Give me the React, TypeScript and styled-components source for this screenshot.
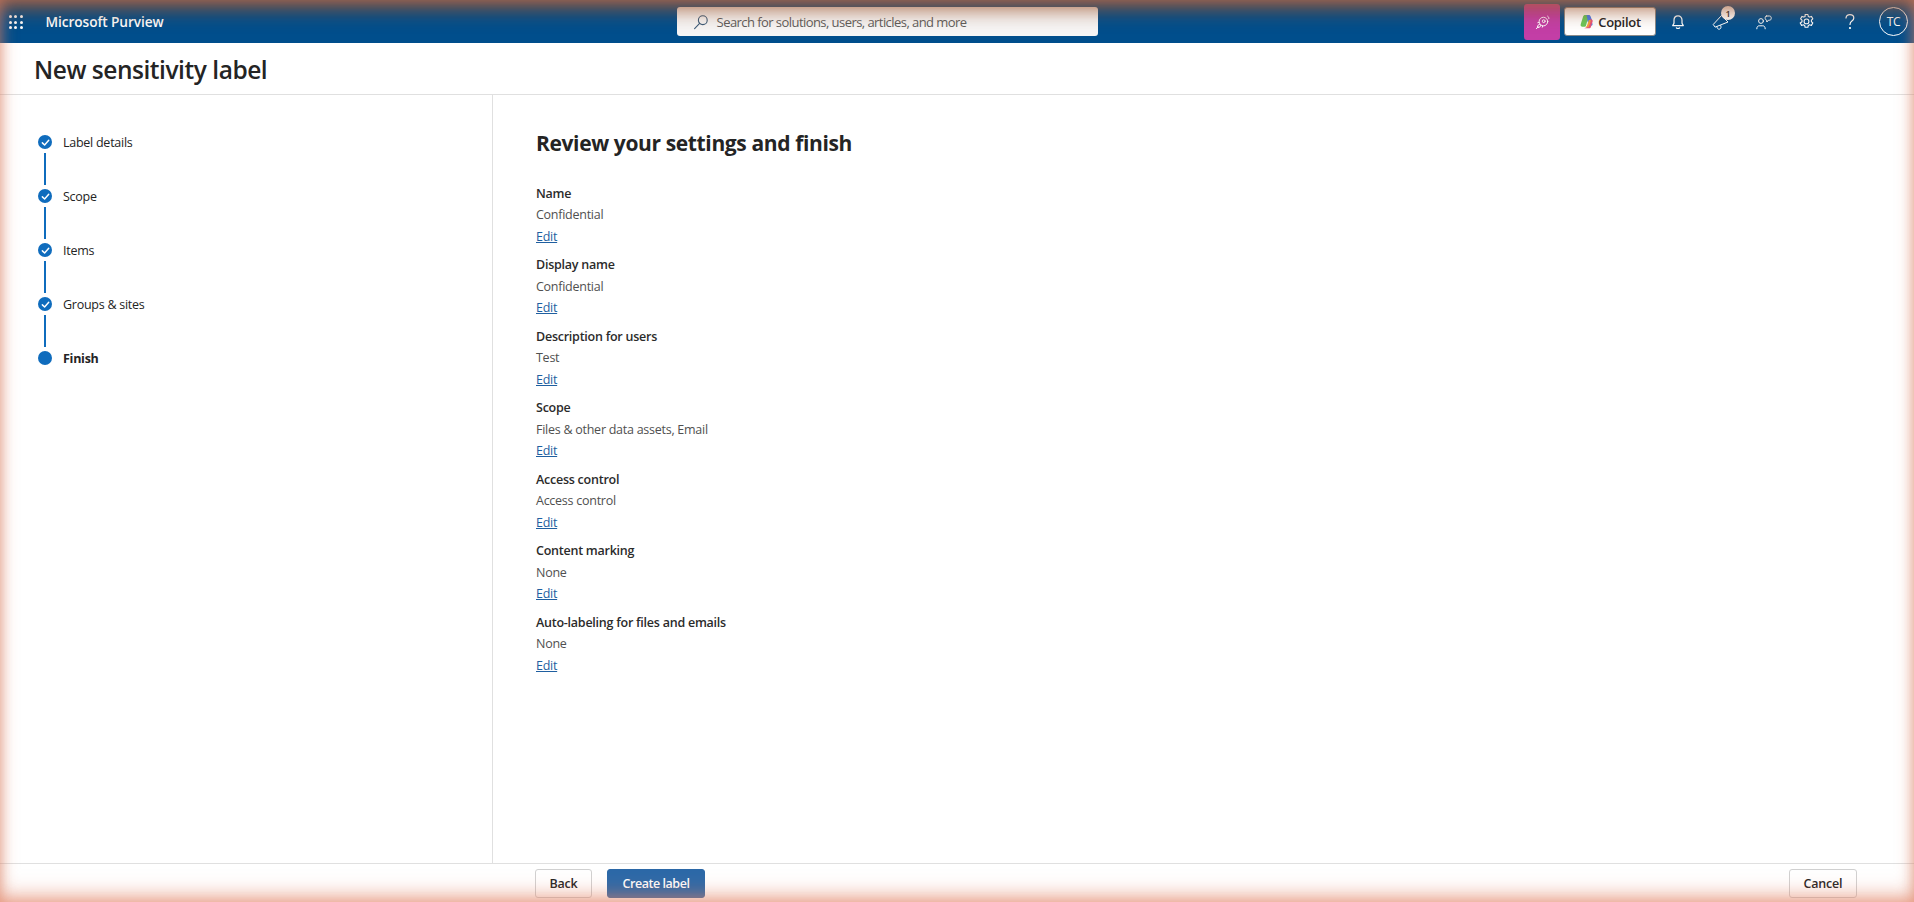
import React from "react";
import styled, { createGlobalStyle } from "styled-components";

const Global = createGlobalStyle`
  html, body { margin: 0; padding: 0; height: 100%; background: #fff; }
  #root { height: 100%; }
  * { box-sizing: border-box; }
  body { font-family: "Open Sans", "Noto Sans", "Liberation Sans", sans-serif; color: #242424; overflow: hidden; }
`;

const Page = styled.div`
  position: relative;
  width: 1914px;
  height: 902px;
  display: grid;
  grid-template-rows: 43px 52px 1fr 39px;
  background: #fff;
`;

const Vignette = styled.div`
  position: absolute;
  inset: 0;
  pointer-events: none;
  z-index: 5;
  box-shadow:
    inset 0 0 15px 0 rgba(226, 130, 100, 0.6),
    inset 0 -12px 22px -6px rgba(226, 130, 100, 0.55),
    inset 0 22px 20px -12px rgba(150, 80, 40, 0.75);
`;

const TopBar = styled.header`
  display: flex;
  align-items: center;
  background: #004e8c;
  color: #fff;
  position: relative;
`;

const Waffle = styled.div`
  display: grid;
  grid-template-columns: repeat(3, 3px);
  gap: 2.3px;
  margin-left: 9px;
  margin-top: 1px;
  i { width: 3px; height: 3px; background: #fff; border-radius: 50%; display: block; }
`;

const Brand = styled.div`
  margin-left: 23px;
  font-size: 13.7px;
  font-weight: 600;
  letter-spacing: -0.1px;
  width: 631px;
  white-space: nowrap;
`;

const Search = styled.div`
  width: 421px;
  height: 29px;
  background: #f6f5f5;
  border-radius: 3px;
  display: flex;
  align-items: center;
  padding-left: 16px;
  gap: 8px;
  color: #5c5c5c;
  font-size: 13px;
  letter-spacing: -0.56px;
  svg { flex: none; }
`;

const Actions = styled.div`
  margin-left: auto;
  display: flex;
  align-items: center;
  height: 100%;
`;

const PinkTile = styled.div`
  width: 36px;
  height: 36px;
  border-radius: 3px;
  background: #c33ea6;
  display: flex;
  align-items: center;
  justify-content: center;
  margin-right: 4px;
  margin-top: 1px;
`;

const CopilotBtn = styled.div`
  width: 92px;
  height: 29px;
  background: #fff;
  border: 1px solid #8a8a8a;
  border-radius: 3px;
  color: #242424;
  font-size: 13px;
  font-weight: 600;
  letter-spacing: -0.3px;
  display: flex;
  align-items: center;
  justify-content: center;
  gap: 4px;
`;

const IconSlot = styled.div`
  position: relative;
  width: 43px;
  height: 100%;
  display: flex;
  align-items: center;
  justify-content: center;
`;

const Badge = styled.span`
  position: absolute;
  top: 6px;
  left: 22px;
  width: 14px;
  height: 14px;
  border-radius: 50%;
  background: #fff;
  color: #242424;
  font-size: 9px;
  font-weight: 600;
  display: flex;
  align-items: center;
  justify-content: center;
`;

const Avatar = styled.div`
  width: 29px;
  height: 29px;
  border: 1px solid #fff;
  border-radius: 50%;
  display: flex;
  align-items: center;
  justify-content: center;
  font-size: 12px;
  letter-spacing: -0.3px;
  margin: 0 6px 0 8px;
`;

const TitleBand = styled.div`
  border-bottom: 1px solid #e0e0e0;
  padding-left: 34px;
  display: flex;
  align-items: center;
`;

const PageTitle = styled.h1`
  margin: 0;
  font-size: 24.5px;
  font-weight: 600;
  letter-spacing: -0.46px;
  color: #242424;
  padding-top: 2px;
`;

const Body = styled.div`
  display: grid;
  grid-template-columns: 493px 1fr;
  min-height: 0;
`;

const StepRail = styled.nav`
  border-right: 1px solid #e0e0e0;
  padding: 40px 0 0 38px;
`;

const Step = styled.div`
  display: flex;
  align-items: flex-start;
  gap: 11px;
  height: 54px;
`;

const StepMark = styled.div`
  width: 14px;
  display: flex;
  flex-direction: column;
  align-items: center;
`;

const Dot = styled.div`
  width: 14px;
  height: 14px;
  border-radius: 50%;
  background: #0f6cbd;
  display: flex;
  align-items: center;
  justify-content: center;
`;

const Connector = styled.div`
  width: 2px;
  height: 32px;
  margin-top: 4px;
  background: #0f6cbd;
`;

const StepLabel = styled.div<{ $current?: boolean }>`
  font-size: 12.5px;
  line-height: 14px;
  letter-spacing: -0.26px;
  padding-top: 1px;
  font-weight: ${(p) => (p.$current ? 700 : 400)};
  color: #242424;
`;

const Main = styled.main`
  padding: 34px 0 0 43px;
`;

const Heading = styled.h2`
  margin: 0 0 25.5px;
  font-size: 21px;
  line-height: 28px;
  font-weight: 700;
  letter-spacing: -0.37px;
  color: #242424;
`;

const Group = styled.section`
  height: 71.5px;
  font-size: 12.5px;
  line-height: 21.5px;
  letter-spacing: -0.26px;
`;

const FieldLabel = styled.div`
  font-weight: 600;
  letter-spacing: -0.24px;
  color: #2b2b2b;
`;

const FieldValue = styled.div`
  color: #505050;
`;

const EditLink = styled.a`
  color: #1f5fa0;
  text-decoration: underline;
  display: block;
  width: max-content;
`;

const Footer = styled.footer`
  border-top: 1px solid #e0e0e0;
  display: flex;
  align-items: center;
  padding: 0 57px 0 535px;
  gap: 15px;
`;

const Button = styled.button<{ $primary?: boolean; $w: number }>`
  width: ${(p) => p.$w}px;
  height: 29px;
  border-radius: 3px;
  border: 1px solid ${(p) => (p.$primary ? "#2c69a8" : "#d1d1d1")};
  background: ${(p) => (p.$primary ? "#2c69a8" : "#fff")};
  color: ${(p) => (p.$primary ? "#fff" : "#242424")};
  font-family: inherit;
  font-size: 12.5px;
  font-weight: 600;
  letter-spacing: ${(p) => (p.$primary ? "-0.45px" : "-0.2px")};
  padding: 0;
`;

const Spacer = styled.div`
  flex: 1;
`;

const Check = () => (
  <svg width="9" height="9" viewBox="0 0 10 10" fill="none">
    <path d="M1.5 5.4 4 7.8 8.6 2.6" stroke="#fff" strokeWidth="1.6" strokeLinecap="round" strokeLinejoin="round" />
  </svg>
);

const SearchIcon = () => (
  <svg width="16" height="16" viewBox="0 0 16 16" fill="none" stroke="#3a5a78" strokeWidth="1.1" strokeLinecap="round">
    <circle cx="9.8" cy="6.2" r="4.4" />
    <path d="M6.6 9.4 1.6 14.6" />
  </svg>
);

const RocketIcon = () => (
  <svg width="15" height="15" viewBox="0 0 16 16" fill="none" stroke="#fff" strokeWidth="1" strokeLinecap="round" strokeLinejoin="round">
    <circle cx="9" cy="7" r="4.6" />
    <circle cx="9.300" cy="6.600" r="1.500" />
    <path d="M13.500 1.200c.9.6 1.300 1.400 1.300 2.600M5.200 9.800 3.500 10.500l-1 2.200M6.200 10.800 5.500 12.500l-2.200 1M3 8.200l1.300-.4M7.800 13l.4-1.300M3.400 12.600 1.400 14.600" />
  </svg>
);

const CopilotLogo = () => (
  <svg width="15" height="15" viewBox="0 0 16 16">
    <path d="M6.500 1h3.200c.9 0 1.500.6 1.800 1.400l2.900 8c.3 1-.3 2.200-1.500 2.200l-2.200-.2L7 1.800Z" fill="#3f8cf0" />
    <path d="M6.600 1C5.300 1 4.700 1.700 4.300 3L1.800 11c-.4 1.300.4 2.600 1.800 2.600h2.200c.9 0 1.400-.5 1.700-1.300L10 3.200 9 1Z" fill="#6bc75a" />
    <path d="M8 1h2.500c1 0 1.500.6 1.800 1.400L14 7H9.500Z" fill="#4a7cf0" />
    <path d="M12 5.500h.8c1.300 0 2.100 1.100 1.700 2.400l-1.700 5.600c-.4 1.100-1 1.600-2 1.600H5.500l1.600-.4c.9-.2 1.400-.8 1.700-1.700Z" fill="#e8527a" />
    <path d="M10.500 6.500h2c-.2 2.500-1.200 5.600-2.500 7.500H6.800c.9-.2 1.500-.8 1.800-1.700Z" fill="#f4a13a" />
  </svg>
);

const Bell = () => (
  <svg width="16" height="16" viewBox="0 0 16 16" fill="none" stroke="#fff" strokeWidth="1.2" strokeLinejoin="round" strokeLinecap="round">
    <path d="M8 1.800c-2.500 0-4 1.900-4 4.200v3.200L2.700 11.600h10.600L12 9.200V6c0-2.300-1.500-4.200-4-4.200Z" />
    <path d="M6.400 13.800c.4.500 1 .7 1.600.7s1.200-.2 1.600-.7" />
  </svg>
);

const Megaphone = () => (
  <svg width="18" height="18" viewBox="0 0 18 18" fill="none" stroke="#fff" strokeWidth="1" strokeLinejoin="round" strokeLinecap="round">
    <path d="M1.500 11.200 9.500 2.500 16 9 3.500 14Z" />
    <path d="M5 13.800c0 1.500 1 2.500 2.200 2.400 1.100-.1 1.900-1 1.800-2.300l-.3-1.300" />
  </svg>
);

const Feedback = () => (
  <svg width="18" height="16" viewBox="0 0 18 16" fill="none" stroke="#fff" strokeWidth="1" strokeLinejoin="round" strokeLinecap="round">
    <circle cx="6" cy="7" r="2.400" />
    <path d="M1.800 14.800c0-2 .9-3 2.400-3h3.600c1.500 0 2.400 1 2.400 3" />
    <path d="M11.500 2h3c1 0 1.700.7 1.700 1.700v.8c0 1-.7 1.700-1.700 1.700H13.500L11.800 8V6.200c-.9-.1-1.600-.8-1.600-1.700v-.8C10.200 2.700 10.600 2 11.500 2Z" />
  </svg>
);

const Gear = () => (
  <svg width="17" height="17" viewBox="0 0 17 17" fill="none" stroke="#fff" strokeWidth="1.1" strokeLinejoin="round">
    <path d="M7.100 1.500h2.800l.4 1.900 1.300.7 1.800-.7 1.400 2.400-1.400 1.300v1.600l1.400 1.300-1.400 2.400-1.800-.7-1.300.7-.4 1.900H7.100l-.4-1.900-1.300-.7-1.800.7-1.400-2.400L4 8.700V7.100L2.600 5.800 4 3.400l1.800.7 1.300-.7Z" />
    <circle cx="8.500" cy="8.400" r="2.400" />
  </svg>
);

const Help = () => (
  <svg width="14" height="18" viewBox="0 0 14 18" fill="none" stroke="#fff" strokeWidth="1.2" strokeLinecap="round">
    <path d="M3 5c.2-2 1.700-3.300 3.900-3.300 2.300 0 3.900 1.400 3.900 3.300 0 1.400-.7 2.200-1.900 3.100C7.700 9 7 9.800 7 11.500" />
    <circle cx="7" cy="15" r=".5" fill="#fff" />
  </svg>
);

const steps = ["Label details", "Scope", "Items", "Groups & sites", "Finish"];

const fields: [string, string][] = [
  ["Name", "Confidential"],
  ["Display name", "Confidential"],
  ["Description for users", "Test"],
  ["Scope", "Files & other data assets, Email"],
  ["Access control", "Access control"],
  ["Content marking", "None"],
  ["Auto-labeling for files and emails", "None"],
];

export default function App() {
  return (
    <Page>
      <Global />
      <TopBar>
        <Waffle>
          {Array.from({ length: 9 }).map((_, i) => (
            <i key={i} />
          ))}
        </Waffle>
        <Brand>Microsoft Purview</Brand>
        <Search>
          <SearchIcon />
          <span>Search for solutions, users, articles, and more</span>
        </Search>
        <Actions>
          <PinkTile>
            <RocketIcon />
          </PinkTile>
          <CopilotBtn>
            <CopilotLogo />
            Copilot
          </CopilotBtn>
          <IconSlot>
            <Bell />
          </IconSlot>
          <IconSlot>
            <Megaphone />
            <Badge>1</Badge>
          </IconSlot>
          <IconSlot>
            <Feedback />
          </IconSlot>
          <IconSlot>
            <Gear />
          </IconSlot>
          <IconSlot>
            <Help />
          </IconSlot>
          <Avatar>TC</Avatar>
        </Actions>
      </TopBar>
      <TitleBand>
        <PageTitle>New sensitivity label</PageTitle>
      </TitleBand>
      <Body>
        <StepRail>
          {steps.map((s, i) => {
            const last = i === steps.length - 1;
            return (
              <Step key={s}>
                <StepMark>
                  <Dot>{!last && <Check />}</Dot>
                  {!last && <Connector />}
                </StepMark>
                <StepLabel $current={last}>{s}</StepLabel>
              </Step>
            );
          })}
        </StepRail>
        <Main>
          <Heading>Review your settings and finish</Heading>
          {fields.map(([label, value]) => (
            <Group key={label}>
              <FieldLabel>{label}</FieldLabel>
              <FieldValue>{value}</FieldValue>
              <EditLink href="#">Edit</EditLink>
            </Group>
          ))}
        </Main>
      </Body>
      <Footer>
        <Button $w={57}>Back</Button>
        <Button $w={98} $primary>
          Create label
        </Button>
        <Spacer />
        <Button $w={68}>Cancel</Button>
      </Footer>
      <Vignette />
    </Page>
  );
}
